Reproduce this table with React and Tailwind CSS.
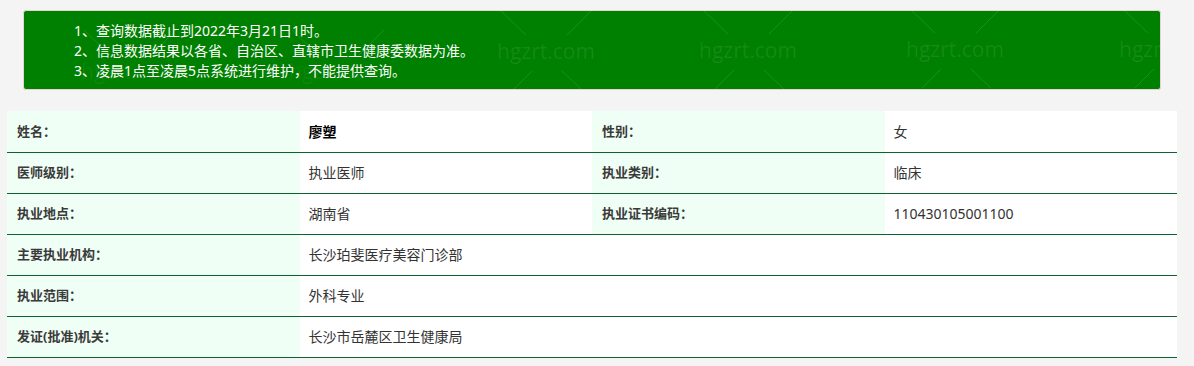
import React from 'react'

const rows = [
  [
    { label: '姓名：', value: '廖塑', strong: true },
    { label: '性别：', value: '女' },
  ],
  [
    { label: '医师级别：', value: '执业医师' },
    { label: '执业类别：', value: '临床' },
  ],
  [
    { label: '执业地点：', value: '湖南省' },
    { label: '执业证书编码：', value: '110430105001100' },
  ],
  [{ label: '主要执业机构：', value: '长沙珀斐医疗美容门诊部' }],
  [{ label: '执业范围：', value: '外科专业' }],
  [{ label: '发证(批准)机关：', value: '长沙市岳麓区卫生健康局' }],
]

const marks = [
  [130, 72],
  [338, 72],
  [546, 52],
  [748, 51],
  [955, 50],
  [1168, 50],
]

function Watermarks() {
  return (
    <svg className="pointer-events-none absolute inset-0" width="1194" height="366">
      {marks.map(([cx, cy]) => (
        <g key={cx} stroke="rgba(255,255,255,0.11)" strokeWidth="1" fill="none">
          <line x1={cx - 46} y1={cy - 42} x2={cx - 20} y2={cy - 17} />
          <line x1={cx + 46} y1={cy - 42} x2={cx + 21} y2={cy - 17} />
          <line x1={cx - 33} y1={cy + 38} x2={cx - 14} y2={cy + 19} />
          <line x1={cx + 16} y1={cy + 19} x2={cx + 36} y2={cy + 38} />
          <text
            x={cx}
            y={cy + 7}
            textAnchor="middle"
            fontSize="21"
            fontFamily="'Open Sans', 'Noto Sans', sans-serif"
            fill={cx < 400 ? 'rgba(255,255,255,0.06)' : 'rgba(255,255,255,0.09)'}
            stroke="none"
          >
            hgzrt.com
          </text>
        </g>
      ))}
    </svg>
  )
}

export default function App() {
  return (
    <div
      className="relative h-[366px] w-[1194px] overflow-hidden bg-[#f4f4f4] pt-[10px]"
      style={{ fontFamily: "'Noto Sans', 'Noto Sans CJK SC', sans-serif" }}
    >
      <div className="ml-[7px] w-[1170px]">
        <div className="mx-[16px] rounded-[3px] border border-[#e6d4d4] bg-[#008000] pt-[10px] pb-[8px] pl-[50px] text-[14px] leading-[20px] text-white">
          <p>1、查询数据截止到2022年3月21日1时。</p>
          <p>2、信息数据结果以各省、自治区、直辖市卫生健康委数据为准。</p>
          <p>3、凌晨1点至凌晨5点系统进行维护，不能提供查询。</p>
        </div>

        <table className="mt-[21px] w-full table-fixed border-collapse">
          <colgroup>
            <col className="w-1/4" />
            <col className="w-1/4" />
            <col className="w-1/4" />
            <col className="w-1/4" />
          </colgroup>
          <tbody>
            {rows.map((row, i) => (
              <tr key={i} className="h-[41px] border-b border-[#0b6430]">
                {row.map((cell) => (
                  <React.Fragment key={cell.label}>
                    <td className="bg-[#f0fff5] pl-[10px] text-[13px] font-bold text-[#3a3a3a]">{cell.label}</td>
                    <td
                      colSpan={row.length === 1 ? 3 : 1}
                      className={`bg-white pl-[9px] text-[14px] ${cell.strong ? 'font-bold text-black' : 'text-[#333]'}`}
                    >
                      {cell.value}
                    </td>
                  </React.Fragment>
                ))}
              </tr>
            ))}
          </tbody>
        </table>
      </div>
      <Watermarks />
    </div>
  )
}
